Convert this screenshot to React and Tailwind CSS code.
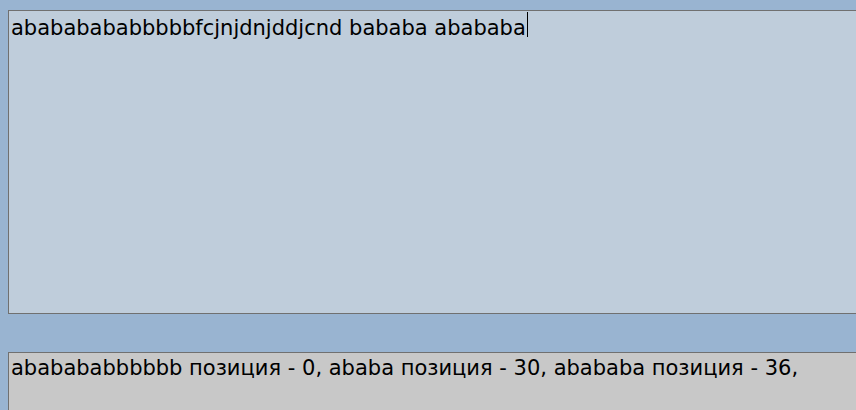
import React from 'react'

export default function App() {
  const text = 'abababababbbbbfcjnjdnjddjcnd bababa abababa'
  const result = 'ababababbbbbb позиция - 0, ababa позиция - 30, abababa позиция - 36,'

  return (
    <div className="w-[856px] h-[410px] overflow-hidden bg-[#99b4d1] pl-2 pt-[10px] font-['DejaVu_Sans',sans-serif] text-[21px] text-black">
      <div className="flex flex-col gap-[38px] w-[860px]">
        <div className="h-[304px] border border-[#707070] bg-[#bfcddb] px-[2px] pt-[1px] leading-[26px]">
          <span>{text}</span>
          <span className="inline-block w-px h-[25px] bg-black align-[-2px] ml-px" />
        </div>
        <div className="h-[80px] border border-[#707070] bg-[#c8c8c8] px-[2px] pt-[2px] leading-[26px]">
          {result}
        </div>
      </div>
    </div>
  )
}
